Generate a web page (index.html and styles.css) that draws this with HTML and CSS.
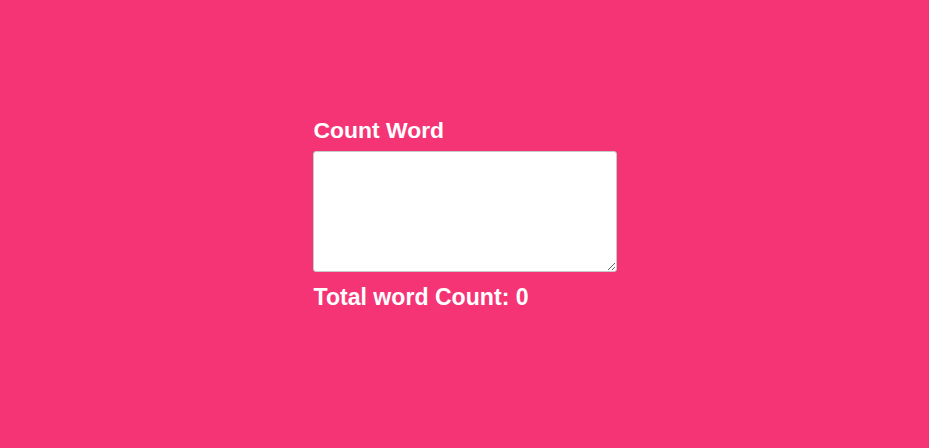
FILE: index.html
```html
<!DOCTYPE html>
<html>
<head>
<meta charset="utf-8">
<link rel="stylesheet" href="styles.css">
</head>
<body>
<div class="wrap">
  <label class="title" for="txt">Count Word</label>
  <textarea id="txt" class="box"></textarea>
  <div class="total">Total word Count: <span>0</span></div>
</div>
</body>
</html>
```
FILE: styles.css
```css
html, body {
  margin: 0;
  padding: 0;
  height: 100%;
}
body {
  background: #f53476;
  font-family: "Liberation Sans", Arial, sans-serif;
  color: #fff;
}
.wrap {
  width: 304px;
  margin: 0 auto;
  padding-top: 117px;
  display: flex;
  flex-direction: column;
}
.title {
  font-size: 22.9px;
  font-weight: bold;
  line-height: 26px;
  padding-left: 1px;
  margin-bottom: 8px;
}
.box {
  box-sizing: border-box;
  width: 304px;
  height: 121px;
  border: 1px solid #c8c8c8;
  border-radius: 3px;
  background: #fff;
  padding: 2px;
  margin: 0;
  font-family: "Liberation Mono", monospace;
  font-size: 13px;
}
.total {
  margin-top: 12px;
  font-size: 23.1px;
  font-weight: bold;
  line-height: 26px;
  padding-left: 1px;
}
```
